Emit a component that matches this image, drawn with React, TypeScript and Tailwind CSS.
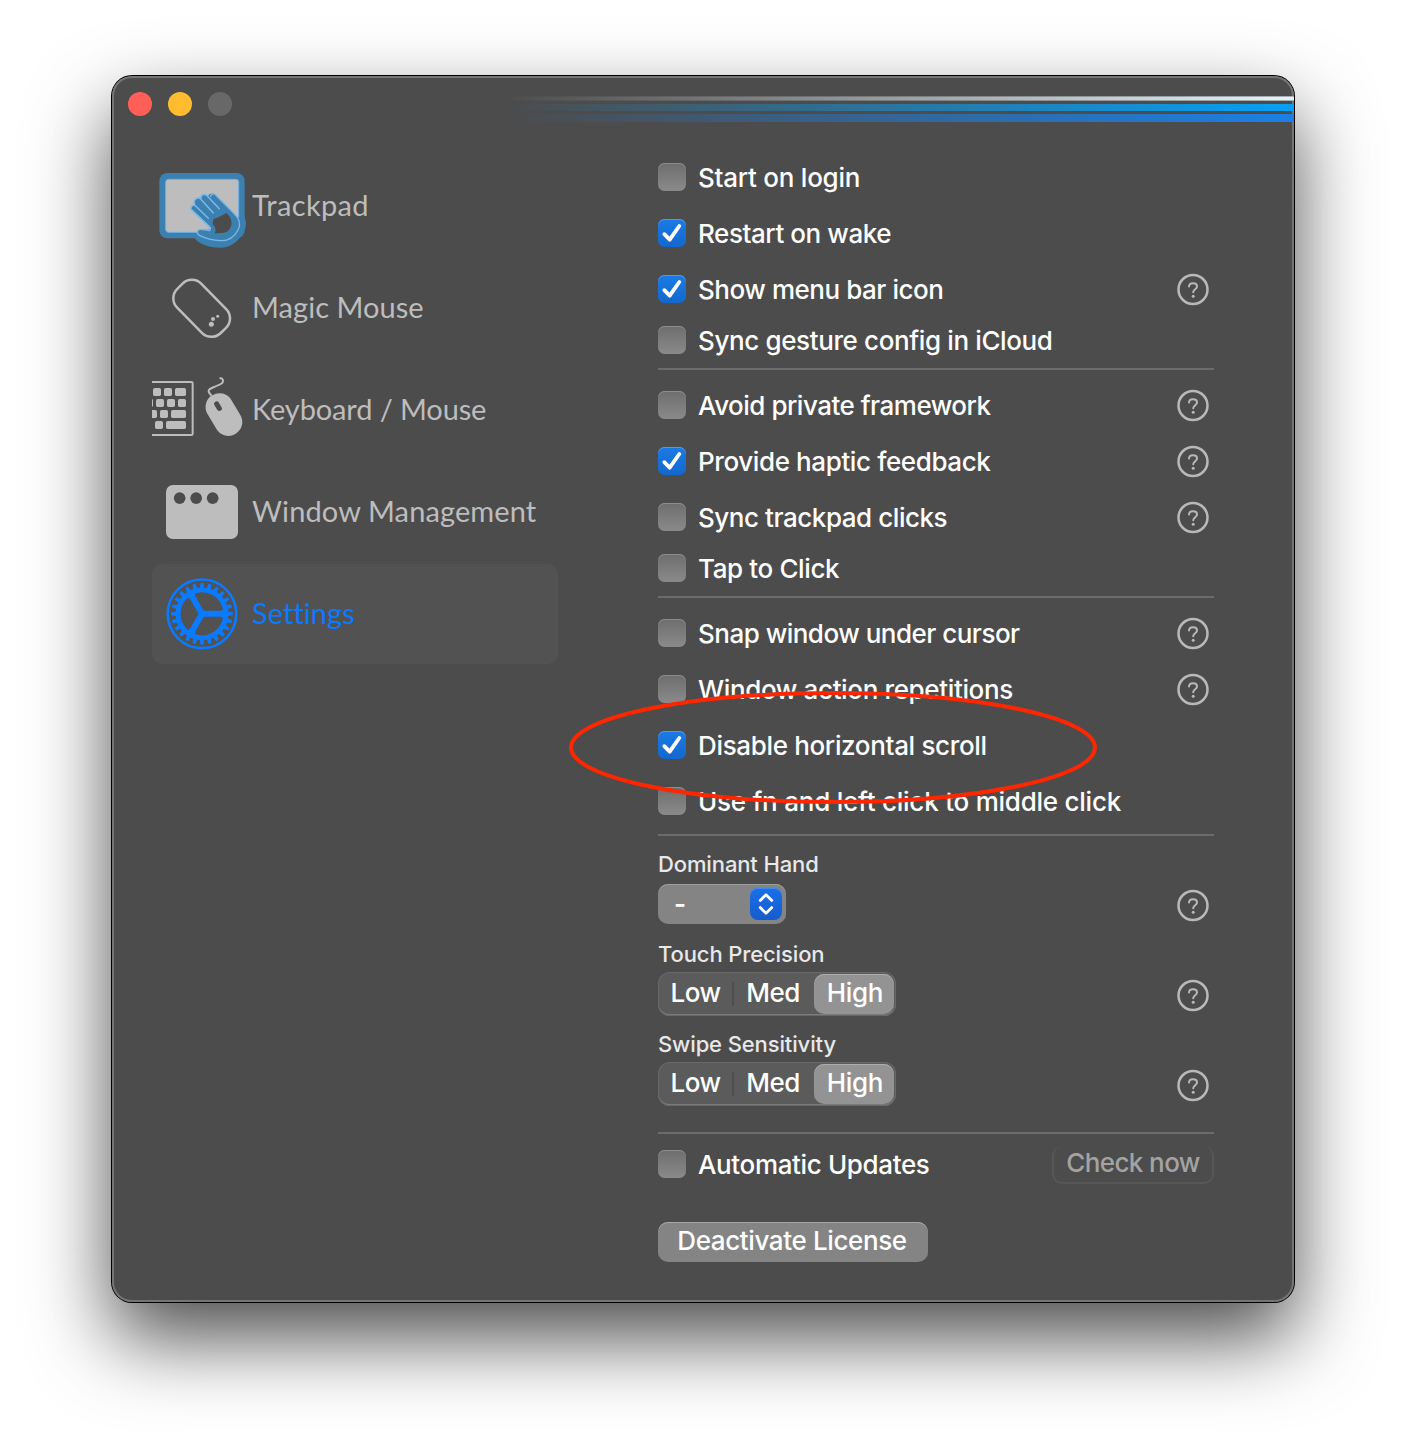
import React from 'react';

interface NavItemProps {
  icon: React.ReactNode;
  label: string;
  labelClass: string;
  active?: boolean;
}

const NavItem: React.FC<NavItemProps> = ({ icon, label, labelClass, active }) => (
  <div
    className={
      active
        ? 'flex h-[100px] items-center rounded-[10px] bg-[#525252] text-[#0a7aff]'
        : 'flex h-[100px] items-center rounded-[10px] text-[#bdbdbd]'
    }
  >
    {icon}
    <span className={`whitespace-nowrap pb-[3px] font-['Lato'] text-[29px] leading-none ${labelClass}`}>{label}</span>
  </div>
);

const TrackpadIcon = () => (
  <svg className="size-[100px] shrink-0" viewBox="6 -27 300 300" fill="none">
    <rect x="28" y="24" width="256" height="196" rx="24" fill="#3c80b0" />
    <path d="M128 210C140 236 172 248 214 248C246 247 268 224 280 204C290 186 290 166 282 154Z" fill="#3c80b0" />
    <rect x="47" y="43" width="219" height="159" rx="9" fill="#bdbdbd" stroke="#6fb1e6" strokeWidth="3" />
    <path d="M250 146L266 158L284 160L280 204L214 246L150 210Z" fill="#3c80b0" />
    <path
      d="M123 131C122 122 130 119 134 120C128 104 142 95 152 100C150 88 166 84 174 95C176 83 192 83 198 91L250 143C268 160 274 178 264 195C252 218 236 228 212 228C190 228 168 222 148 213C138 204 142 194 152 193L176 194C182 194 184 190 180 186Z"
      fill="#3c80b0"
    />
    <path
      d="M182 94C184 84 194 85 200 93L250 143C268 160 274 178 264 195C252 218 236 228 212 227C190 226 168 221 148 211C138 204 142 192 152 193L176 196"
      stroke="#7ab8ea"
      strokeWidth="4"
      strokeLinecap="round"
    />
    <path
      d="M123 131C122 122 130 119 136 122L175 160M134 118C128 104 142 95 152 102L190 144M153 100C152 88 166 84 174 95L208 131M124 134L178 185Q184 192 178 197"
      stroke="#7ab8ea"
      strokeWidth="4.5"
      strokeLinecap="round"
      strokeLinejoin="round"
    />
    <path d="M190 162C206 158 218 150 230 144L240 156C247 170 247 184 236 196C230 203 222 205 194 205C200 194 196 186 188 178Z" fill="#4c4c4c" />
  </svg>
);

const MagicMouseIcon = () => (
  <svg className="size-[100px] shrink-0" viewBox="36 -6 300 300">
    <rect
      x="134"
      y="52"
      width="102"
      height="186"
      rx="40"
      transform="rotate(-44.5 185 145)"
      fill="none"
      stroke="#bdbdbd"
      strokeWidth="7.5"
    />
    <g fill="#bdbdbd">
      <circle cx="214" cy="193" r="7.5" />
      <circle cx="219" cy="177" r="6" />
      <circle cx="233" cy="169" r="4.5" />
    </g>
  </svg>
);

const KeyboardMouseIcon = () => (
  <svg className="size-[100px] shrink-0" viewBox="36 300 300 300" fill="#bdbdbd">
    <rect x="-60" y="366" width="218" height="159" rx="4" fill="none" stroke="#bdbdbd" strokeWidth="6" />
    <rect x="39" y="384" width="24" height="24" rx="5" />
    <rect x="72" y="384" width="24" height="24" rx="5" />
    <rect x="105" y="384" width="33" height="24" rx="5" />
    <rect x="15" y="417" width="24" height="24" rx="5" />
    <rect x="48" y="417" width="24" height="24" rx="5" />
    <rect x="81" y="417" width="24" height="24" rx="5" />
    <rect x="114" y="417" width="24" height="24" rx="5" />
    <rect x="27" y="450" width="24" height="24" rx="5" />
    <rect x="60" y="450" width="24" height="24" rx="5" />
    <rect x="93" y="450" width="45" height="24" rx="5" />
    <rect x="45" y="483" width="24" height="24" rx="5" />
    <rect x="78" y="483" width="60" height="24" rx="5" />
    <rect x="210.500" y="396" width="83" height="135" rx="41" transform="rotate(-31 252 464)" />
    <rect x="226.500" y="423" width="15" height="31" rx="7.500" transform="rotate(-31 234 438.500)" fill="#4c4c4c" />
    <path
      d="M213 405C200 392 206 387 222 381C242 373 250 370 249 362C248 357 245 354 241 355"
      fill="none"
      stroke="#bdbdbd"
      strokeWidth="6"
      strokeLinecap="round"
    />
  </svg>
);

const WindowIcon = () => (
  <svg className="size-[100px] shrink-0" viewBox="36 -24 300 300">
    <rect x="78" y="45" width="216" height="162" rx="21" fill="#bdbdbd" />
    <g fill="#4c4c4c">
      <circle cx="119" cy="84.500" r="17.500" />
      <circle cx="168.500" cy="84.500" r="17.500" />
      <circle cx="218" cy="84.500" r="17.500" />
    </g>
  </svg>
);

const teeth = Array.from({ length: 24 }, (_, i) => i * 15);

const GearIcon = () => (
  <svg className="size-[100px] shrink-0" viewBox="36 282 300 300">
    <g transform="translate(186 431.500) scale(3)">
      <circle r="34.300" fill="none" stroke="#0a7aff" strokeWidth="2.600" />
      {teeth.map((a) => (
        <path key={a} d="M-2.200 -25.500L-1.500 -30.800H1.500L2.200 -25.500Z" transform={`rotate(${a})`} fill="#0a7aff" />
      ))}
      <circle r="26.400" fill="#0a7aff" />
      {[0, 120, 240].map((a) => (
        <path
          key={a}
          d="M2.890 5L18.850 5A19.500 19.500 0 0 1 -5.100 18.820Z"
          transform={`rotate(${a})`}
          fill="#525252"
          stroke="#525252"
          strokeWidth="4"
          strokeLinejoin="round"
        />
      ))}
    </g>
  </svg>
);

const HelpIcon = () => (
  <svg className="ml-auto mr-[5px] -my-0.5 h-[33px] w-8 shrink-0" viewBox="0 0 32 33" fill="none" stroke="#b9b9b9">
    <circle cx="16" cy="16.500" r="14.500" strokeWidth="2.500" />
    <path d="M12 13.500C12.100 11.300 13.700 10.200 16 10.200C18.300 10.200 20 11.400 20 13.400C20 16.100 16.200 16.300 16.200 19.300" strokeWidth="2" strokeLinecap="round" />
    <circle cx="16.200" cy="23.200" r="1.500" fill="#b9b9b9" stroke="none" />
  </svg>
);

const Checkbox = ({ checked }: { checked?: boolean }) =>
  checked ? (
    <span className="flex size-7 shrink-0 rounded-[6.500px] bg-linear-to-b from-[#1a7be6] to-[#1468cc] shadow-[inset_0_1px_0_#4f9af0]">
      <svg className="size-7" viewBox="0 0 28 28" fill="none">
        <path d="M6.300 15.200L11.700 20.700L21.300 7" stroke="#fff" strokeWidth="3.800" strokeLinecap="round" strokeLinejoin="round" />
      </svg>
    </span>
  ) : (
    <span className="size-7 shrink-0 rounded-[6.500px] bg-linear-to-b from-[#6e6e6e] to-[#8a8a8a] shadow-[inset_0_1px_0_#8c8c8c]" />
  );

interface OptionProps {
  label: string;
  labelClass: string;
  checked?: boolean;
  help?: boolean;
}

const Option: React.FC<OptionProps> = ({ label, labelClass, checked, help }) => (
  <div className="flex h-7 items-center">
    <Checkbox checked={checked} />
    <span className={`ml-3 whitespace-nowrap pt-0.5 text-[26px] font-medium leading-7 text-white ${labelClass}`}>{label}</span>
    {help && <HelpIcon />}
  </div>
);

const Divider = () => <div className="h-0.5 bg-[#6c6c6c]" />;

const Segmented = () => (
  <div className="flex h-11 w-[238px] items-center rounded-[12px] bg-[#5b5b5b] text-[26px] font-medium leading-none tracking-[-0.5px] text-white shadow-[inset_0_0_0_1px_#686868,inset_0_-2px_0_#7a7a7a]">
    <span className="w-[74px] pb-0.5 pl-px text-center">Low</span>
    <span className="h-6 w-0.5 bg-[#4e4e4e]" />
    <span className="w-[78px] pb-0.5 text-center">Med</span>
    <span className="ml-0.5 flex h-10 w-20 items-center justify-center rounded-[10px] bg-[#939393] pb-0.5 pl-0.5 tracking-[-0.35px] shadow-[inset_0_1px_0_#adadad]">High</span>
  </div>
);

interface FieldLabelProps {
  children: React.ReactNode;
}

const FieldLabel: React.FC<FieldLabelProps> = ({ children }) => (
  <div className="text-[22px] font-medium leading-6 tracking-[-0.12px] text-[#e8e8e8]">{children}</div>
);

const Sidebar = () => (
  <nav className="flex w-[406px] flex-col gap-0.5">
    <NavItem icon={<TrackpadIcon />} label="Trackpad" labelClass="tracking-[0.35px]" />
    <NavItem icon={<MagicMouseIcon />} label="Magic Mouse" labelClass="tracking-[0.05px]" />
    <NavItem icon={<KeyboardMouseIcon />} label="Keyboard / Mouse" labelClass="tracking-[-0.12px]" />
    <NavItem icon={<WindowIcon />} label="Window Management" labelClass="tracking-[0.12px]" />
    <NavItem icon={<GearIcon />} label="Settings" labelClass="tracking-[0.05px]" active />
  </nav>
);

const SettingsPane = () => (
  <div className="flex w-[556px] flex-col pt-[7px]">
    <div className="flex flex-col gap-7">
      <Option label="Start on login" labelClass="tracking-[-0.25px]" />
      <Option label="Restart on wake" labelClass="tracking-[-0.43px]" checked />
      <Option label="Show menu bar icon" labelClass="tracking-[-0.46px]" checked help />
    </div>
    <div className="mb-3.5 mt-[23px]">
      <Option label="Sync gesture config in iCloud" labelClass="tracking-[-0.38px]" />
    </div>
    <Divider />
    <div className="mt-[21px] flex flex-col gap-7">
      <Option label="Avoid private framework" labelClass="tracking-[-0.5px]" help />
      <Option label="Provide haptic feedback" labelClass="tracking-[-0.39px]" checked help />
      <Option label="Sync trackpad clicks" labelClass="tracking-[-0.45px]" help />
    </div>
    <div className="mb-3.5 mt-[23px]">
      <Option label="Tap to Click" labelClass="tracking-[-0.38px]" />
    </div>
    <Divider />
    <div className="relative mb-[19px] mt-[21px] flex flex-col gap-7">
      <Option label="Snap window under cursor" labelClass="tracking-[-0.51px]" help />
      <Option label="Window action repetitions" labelClass="tracking-[-0.36px]" help />
      <Option label="Disable horizontal scroll" labelClass="tracking-[-0.34px]" checked />
      <Option label="Use fn and left click to middle click" labelClass="tracking-[-0.24px]" />
      {/* Hand drawn marker around the horizontal scroll option */}
      <svg className="absolute -left-[90px] top-[71px] h-[116px] w-[530px]" viewBox="0 0 530 116" fill="none">
        <ellipse cx="265" cy="57.500" rx="262" ry="54.500" stroke="#ff2600" strokeWidth="4" />
      </svg>
    </div>
    <Divider />
    <div className="mt-4 flex flex-col">
      <FieldLabel>Dominant Hand</FieldLabel>
      <div className="mt-2 flex h-10 items-center">
        <div className="flex h-10 w-32 items-center justify-between rounded-[10px] bg-[#848484] pl-4 pr-1 shadow-[inset_0_1px_0_#9e9e9e]">
          <span className="text-[26px] font-semibold leading-none text-white">-</span>
          <span className="flex size-8 rounded-[8px] bg-linear-to-b from-[#1a6fe8] to-[#155ccd] shadow-[inset_0_1px_0_#3f8cf0]">
            <svg className="size-8" viewBox="0 0 32 32" fill="none" stroke="#fff" strokeWidth="2.800" strokeLinecap="round" strokeLinejoin="round">
              <path d="M10.200 12.400L16 6.800L21.800 12.400M10.200 19.600L16 25.200L21.800 19.600" />
            </svg>
          </span>
        </div>
        <div className="ml-auto pt-0.5">
          <HelpIcon />
        </div>
      </div>
    </div>
    <div className="mt-[18px] flex flex-col">
      <FieldLabel>Touch Precision</FieldLabel>
      <div className="mt-1.5 flex h-11 items-center">
        <Segmented />
        <div className="ml-auto pt-0.5">
          <HelpIcon />
        </div>
      </div>
    </div>
    <div className="mt-4 flex flex-col">
      <FieldLabel>Swipe Sensitivity</FieldLabel>
      <div className="mt-1.5 flex h-11 items-center">
        <Segmented />
        <div className="ml-auto pt-0.5">
          <HelpIcon />
        </div>
      </div>
    </div>
    <div className="mt-[26px]">
      <Divider />
    </div>
    <div className="mt-3 flex items-start justify-between">
      <div className="pt-1">
        <Option label="Automatic Updates" labelClass="tracking-[-0.36px]" />
      </div>
      <button className="h-[38px] w-[162px] rounded-[10px] border-2 border-t-0 border-[#575757] pb-0.5 text-[26px] font-medium leading-none tracking-[-0.6px] text-[#a3a3a3]">
        Check now
      </button>
    </div>
    <button className="mt-[38px] h-10 w-[270px] rounded-[10px] bg-[#848484] pb-0.5 pr-0.5 text-[26px] font-medium leading-none tracking-[-0.38px] text-white shadow-[inset_0_1px_0_#a6a6a6]">
      Deactivate License
    </button>
  </div>
);

const App: React.FC = () => {
  return (
    <div className="h-[1450px] w-[1406px] overflow-hidden bg-white pl-28 pt-[76px] font-['Inter',sans-serif]">
      <div className="flex h-[1226px] w-[1182px] flex-col overflow-hidden rounded-[20px] bg-[#4c4c4c] shadow-[0_0_0_1px_#000,0_36px_80px_rgba(0,0,0,0.7),inset_0_0_0_2px_#757575]">
        <header className="flex h-20 shrink-0 items-start justify-between pl-4">
          <div className="flex gap-4 pt-4">
            <span className="size-6 rounded-full bg-[#ff5f57]" />
            <span className="size-6 rounded-full bg-[#febc2e]" />
            <span className="size-6 rounded-full bg-[#686868]" />
          </div>
          <div className="flex w-[792px] flex-col pt-5">
            <span className="mb-[3px] h-[5px] border-y border-[#4c4c4c]/40 bg-linear-to-r from-[#e6f3fa]/0 to-[#e6f3fa]" />
            <span className="mb-[3px] h-[7px] bg-linear-to-r from-[#06a0f6]/0 to-[#06a0f6]" />
            <span className="h-[8px] bg-linear-to-r from-[#1a80e6]/0 to-[#1a80e6]" />
          </div>
        </header>
        <div className="flex gap-[100px] pl-10">
          <Sidebar />
          <SettingsPane />
        </div>
      </div>
    </div>
  );
};

export default App;
